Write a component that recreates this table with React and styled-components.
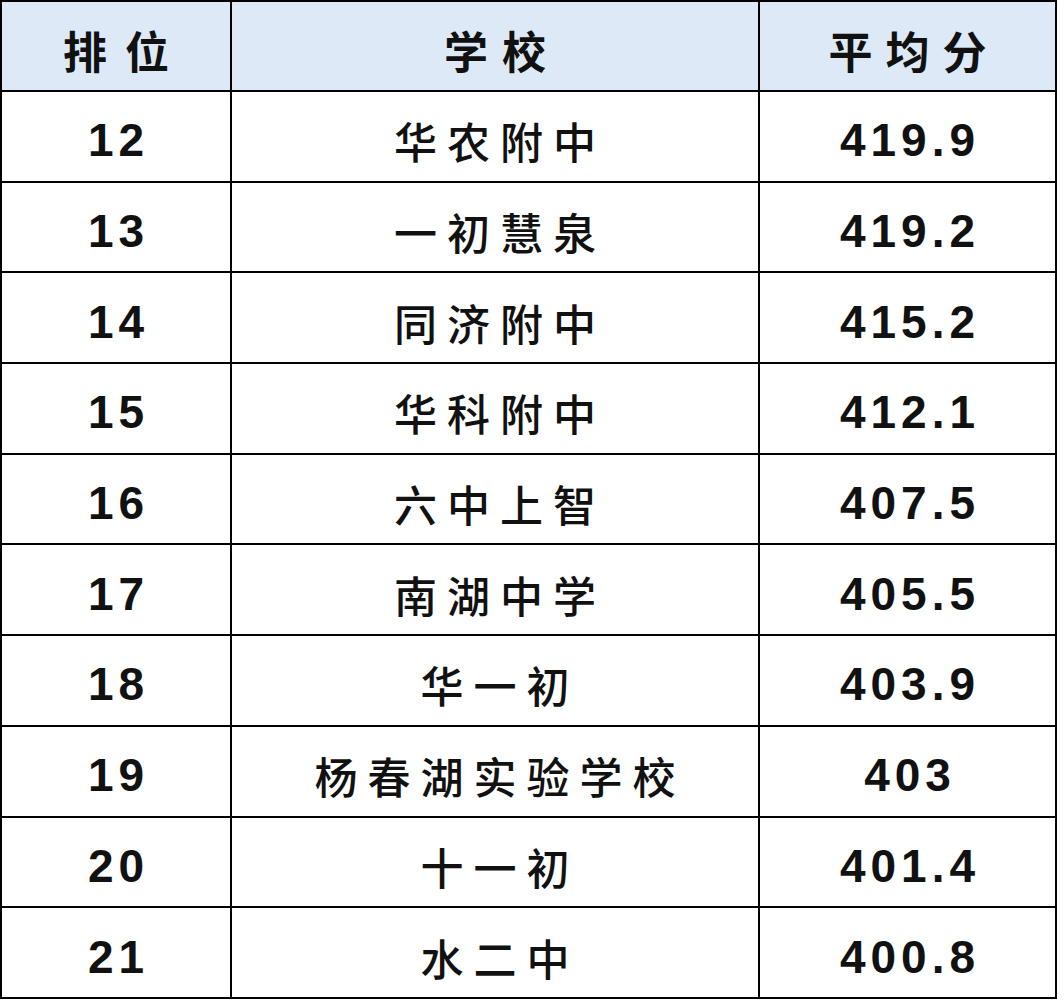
import React from 'react';
import styled, { createGlobalStyle } from 'styled-components';

const GlobalStyle = createGlobalStyle`
  html, body {
    margin: 0;
    padding: 0;
    background: #fff;
  }
`;

const Table = styled.div`
  display: grid;
  grid-template-columns: 228px 526px 295px;
  grid-template-rows: 88px repeat(10, 88.7px);
  gap: 2px;
  padding: 2px;
  width: 1053px;
  background: #000;
  color: #111;
`;

const HeaderCell = styled.div`
  display: flex;
  align-items: center;
  justify-content: center;
  padding-top: 8px;
  padding-left: ${(p) => p.spacing}px;
  background: #dde9f6;
  font-family: 'Noto Sans CJK SC', sans-serif;
  font-size: 44px;
  font-weight: 700;
  letter-spacing: ${(p) => p.spacing}px;
`;

const Cell = styled.div`
  display: flex;
  align-items: center;
  justify-content: center;
  padding-top: 8px;
  background: #fff;
  font-family: ${(p) =>
    p.num ? "'Liberation Sans', Arial, sans-serif" : "'Noto Sans CJK SC', sans-serif"};
  font-size: ${(p) => (p.num ? 46 : 43)}px;
  font-weight: ${(p) => (p.num ? 700 : 500)};
  letter-spacing: ${(p) => (p.num ? 5 : 10)}px;
  padding-left: ${(p) => (p.num ? 5 : 10)}px;
`;

const rows = [
  [12, '华农附中', '419.9'],
  [13, '一初慧泉', '419.2'],
  [14, '同济附中', '415.2'],
  [15, '华科附中', '412.1'],
  [16, '六中上智', '407.5'],
  [17, '南湖中学', '405.5'],
  [18, '华一初', '403.9'],
  [19, '杨春湖实验学校', '403'],
  [20, '十一初', '401.4'],
  [21, '水二中', '400.8'],
];

export default function App() {
  return (
    <>
      <GlobalStyle />
      <Table>
        <HeaderCell spacing={18}>排位</HeaderCell>
        <HeaderCell spacing={14}>学校</HeaderCell>
        <HeaderCell spacing={13}>平均分</HeaderCell>
        {rows.map(([rank, school, score]) => (
          <React.Fragment key={rank}>
            <Cell num>{rank}</Cell>
            <Cell>{school}</Cell>
            <Cell num>{score}</Cell>
          </React.Fragment>
        ))}
      </Table>
    </>
  );
}
